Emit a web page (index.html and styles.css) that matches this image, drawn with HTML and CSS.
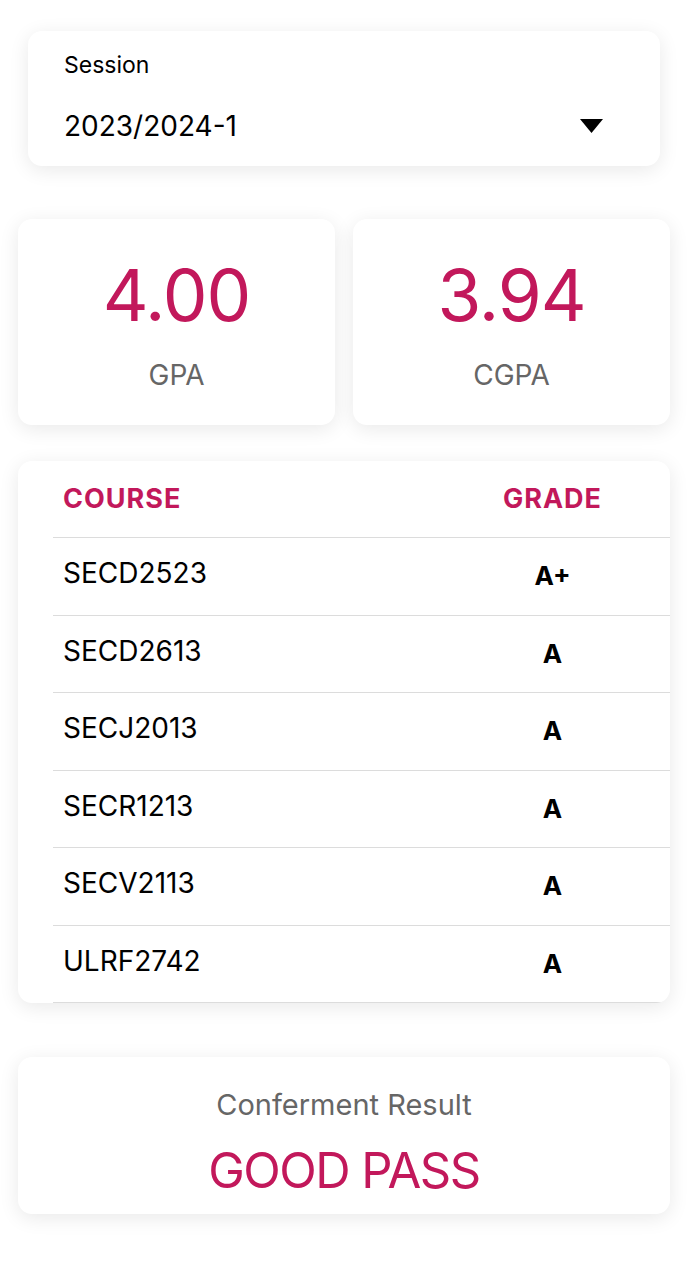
FILE: index.html
```html
<!DOCTYPE html>
<html>
<head>
<meta charset="utf-8">
<link rel="stylesheet" href="styles.css">
</head>
<body>
<div class="page">
  <div class="card session">
    <div class="session-label">Session</div>
    <div class="session-row">
      <span class="session-value">2023/2024-1</span>
      <svg class="caret" width="23" height="14" viewBox="0 0 23 14"><path d="M0 0 H23 L11.5 14 Z" fill="#000"/></svg>
    </div>
  </div>

  <div class="stats">
    <div class="card stat">
      <div class="stat-value">4.00</div>
      <div class="stat-label">GPA</div>
    </div>
    <div class="card stat">
      <div class="stat-value">3.94</div>
      <div class="stat-label">CGPA</div>
    </div>
  </div>

  <div class="card table">
    <div class="row head">
      <span class="course">COURSE</span>
      <span class="grade">GRADE</span>
    </div>
    <div class="row"><span class="course">SECD2523</span><span class="grade">A+</span></div>
    <div class="row"><span class="course">SECD2613</span><span class="grade">A</span></div>
    <div class="row"><span class="course">SECJ2013</span><span class="grade">A</span></div>
    <div class="row"><span class="course">SECR1213</span><span class="grade">A</span></div>
    <div class="row"><span class="course">SECV2113</span><span class="grade">A</span></div>
    <div class="row"><span class="course">ULRF2742</span><span class="grade">A</span></div>
  </div>

  <div class="card result">
    <div class="result-label">Conferment Result</div>
    <div class="result-value">GOOD PASS</div>
  </div>
</div>
</body>
</html>
```

FILE: styles.css
```css
* { box-sizing: border-box; }
html, body {
  margin: 0;
  background: #ffffff;
  font-family: Inter, Roboto, "Liberation Sans", sans-serif;
  color: #000;
}
.page {
  padding: 31px 18px 60px;
  display: flex;
  flex-direction: column;
}
.card {
  background: #fff;
  border-radius: 14px;
  box-shadow: 0 4px 20px rgba(0, 0, 0, 0.09);
}
.session {
  margin: 0 10px;
  height: 135px;
  padding: 20px 57px 0 36px;
}
.session-label {
  font-size: 23px;
  line-height: 28px;
}
.session-row {
  margin-top: 27px;
  height: 40px;
  display: flex;
  align-items: center;
  justify-content: space-between;
}
.session-value {
  font-size: 28px;
  line-height: 40px;
}
.caret { margin-top: -1px; }

.stats {
  margin-top: 53px;
  display: flex;
  gap: 18px;
}
.stat {
  flex: 1;
  height: 206px;
  display: flex;
  flex-direction: column;
  align-items: center;
  padding-top: 34px;
}
.stat-value {
  font-size: 71px;
  line-height: 84px;
  color: #c2185b;
  letter-spacing: -1px;
}
.stat-label {
  margin-top: 20px;
  font-size: 28px;
  line-height: 36px;
  color: #666;
}

.table {
  margin-top: 36px;
  padding-left: 35px;
  height: 542px;
  overflow: hidden;
}
.row {
  display: grid;
  grid-template-columns: 1fr 235px;
  align-items: center;
  height: 77.5px;
  border-bottom: 1px solid #dcdcdc;
  padding-left: 10px;
}
.row.head { height: 77px; }
.course {
  font-size: 28px;
  line-height: 36px;
  padding-bottom: 6px;
}
.grade {
  text-align: center;
  font-weight: 700;
  font-size: 26px;
  line-height: 36px;
}
.head .course, .head .grade {
  color: #c2185b;
  font-weight: 700;
  font-size: 27px;
  letter-spacing: 1px;
  padding-bottom: 0;
}

.result {
  margin-top: 54px;
  height: 157px;
  display: flex;
  flex-direction: column;
  align-items: center;
  padding-top: 30px;
}
.result-label {
  font-size: 29px;
  line-height: 36px;
  color: #666;
}
.result-value {
  margin-top: 18px;
  font-size: 49px;
  line-height: 60px;
  color: #c2185b;
  letter-spacing: -1.5px;
}
```
